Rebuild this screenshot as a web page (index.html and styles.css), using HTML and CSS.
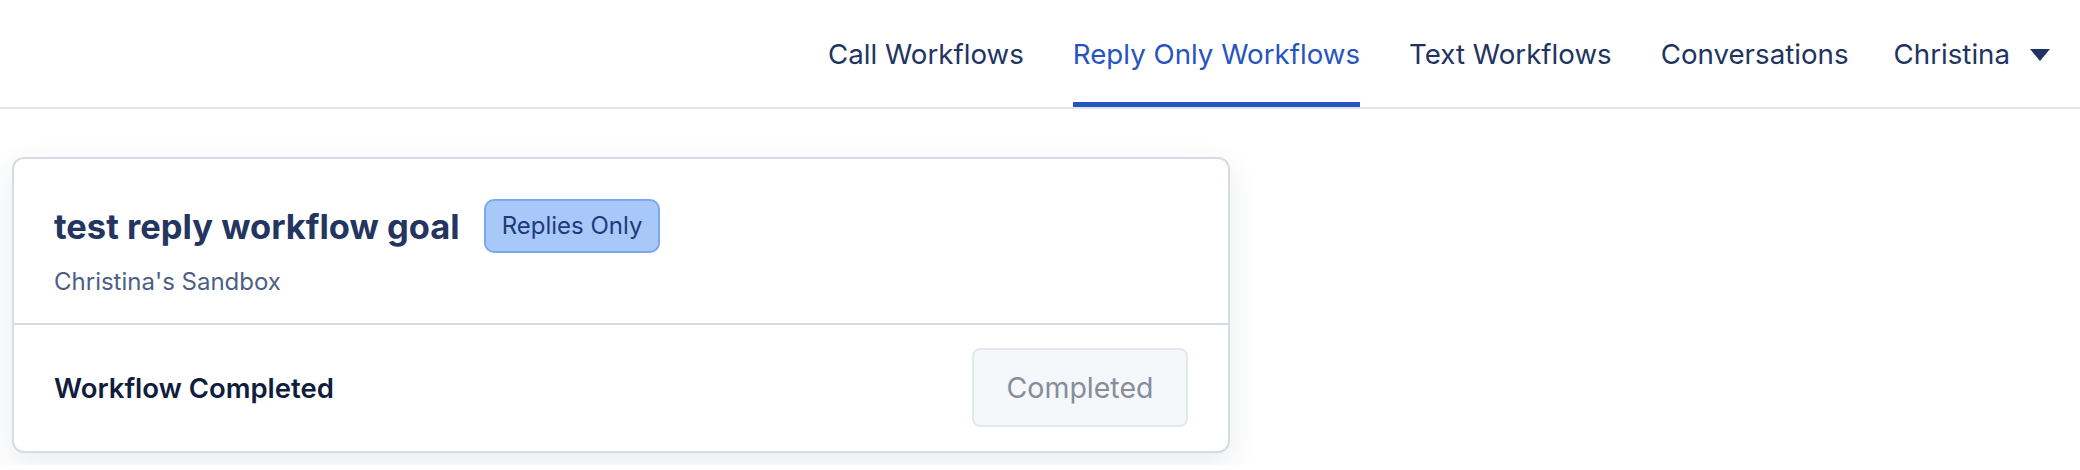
FILE: index.html
```html
<!DOCTYPE html>
<html lang="en">
<head>
<meta charset="utf-8">
<title>Reply Only Workflows</title>
<link rel="stylesheet" href="styles.css">
</head>
<body>
<header class="topbar">
  <nav class="nav">
    <a class="nav-link" href="#">Call Workflows</a>
    <a class="nav-link active" href="#">Reply Only Workflows</a>
    <a class="nav-link" href="#">Text Workflows</a>
    <a class="nav-link" href="#">Conversations</a>
    <a class="nav-link user" href="#">Christina
      <svg class="caret" width="22" height="14" viewBox="0 0 22 14" aria-hidden="true"><path d="M1 1 L21 1 L11 13 Z" fill="currentColor"/></svg>
    </a>
  </nav>
</header>
<main class="content">
  <section class="card">
    <div class="card-top">
      <div class="title-row">
        <h2 class="title">test reply workflow goal</h2>
        <span class="badge">Replies Only</span>
      </div>
      <div class="subtitle">Christina's Sandbox</div>
    </div>
    <div class="card-bottom">
      <div class="status">Workflow Completed</div>
      <button class="btn-completed" disabled>Completed</button>
    </div>
  </section>
</main>
</body>
</html>
```
FILE: styles.css
```css
* { box-sizing: border-box; }
html, body { margin: 0; padding: 0; background: #ffffff; }
body { font-family: Inter, "Noto Sans", sans-serif; color: #1f3461; }

.topbar {
  height: 109px;
  border-bottom: 2px solid #dfe3ec;
  display: flex;
  justify-content: flex-end;
  padding-right: 29px;
}
.nav {
  display: flex;
  align-items: stretch;
  gap: 49px;
}
.nav-link {
  display: flex;
  align-items: center;
  font-size: 27.7px;
  color: #1f3461;
  text-decoration: none;
  border-bottom: 5px solid transparent;
  padding-top: 5px;
}
.nav-link.active {
  color: #2654c0;
  border-bottom-color: #2654c0;
}
.nav-link.user { gap: 19px; margin-left: -4px; }
.caret { margin-top: 2px; }

.content { padding: 48px 12px 12px 12px; }
.card {
  width: 1218px;
  border: 2px solid #d7dbe6;
  border-radius: 12px;
  background: #fff;
  box-shadow: 0 10px 30px rgba(40, 55, 90, 0.10);
  overflow: hidden;
}
.card-top {
  padding: 40px 40px 27px 40px;
  border-bottom: 2px solid #d7dbe6;
}
.title-row {
  display: flex;
  align-items: center;
  gap: 24px;
}
.title {
  margin: 0;
  font-size: 34.5px;
  font-weight: 700;
  color: #233560;
}
.badge {
  display: inline-block;
  height: 54px;
  line-height: 50px;
  padding: 0 16px;
  font-size: 24px;
  color: #1e3a7a;
  background: #a9c8fa;
  border: 2px solid #7ba7f1;
  border-radius: 10px;
}
.subtitle {
  margin-top: 14px;
  font-size: 24px;
  line-height: 29px;
  color: #4d5f84;
}
.card-bottom {
  display: flex;
  align-items: center;
  justify-content: space-between;
  padding: 23px 40px 24px 40px;
}
.status {
  font-size: 27.5px;
  font-weight: 600;
  color: #111d3d;
}
.btn-completed {
  width: 216px;
  height: 79px;
  font-family: inherit;
  font-size: 28.5px;
  color: #868d9b;
  background: #f5f7fb;
  border: 2px solid #e4e8ef;
  border-radius: 8px;
}
```
